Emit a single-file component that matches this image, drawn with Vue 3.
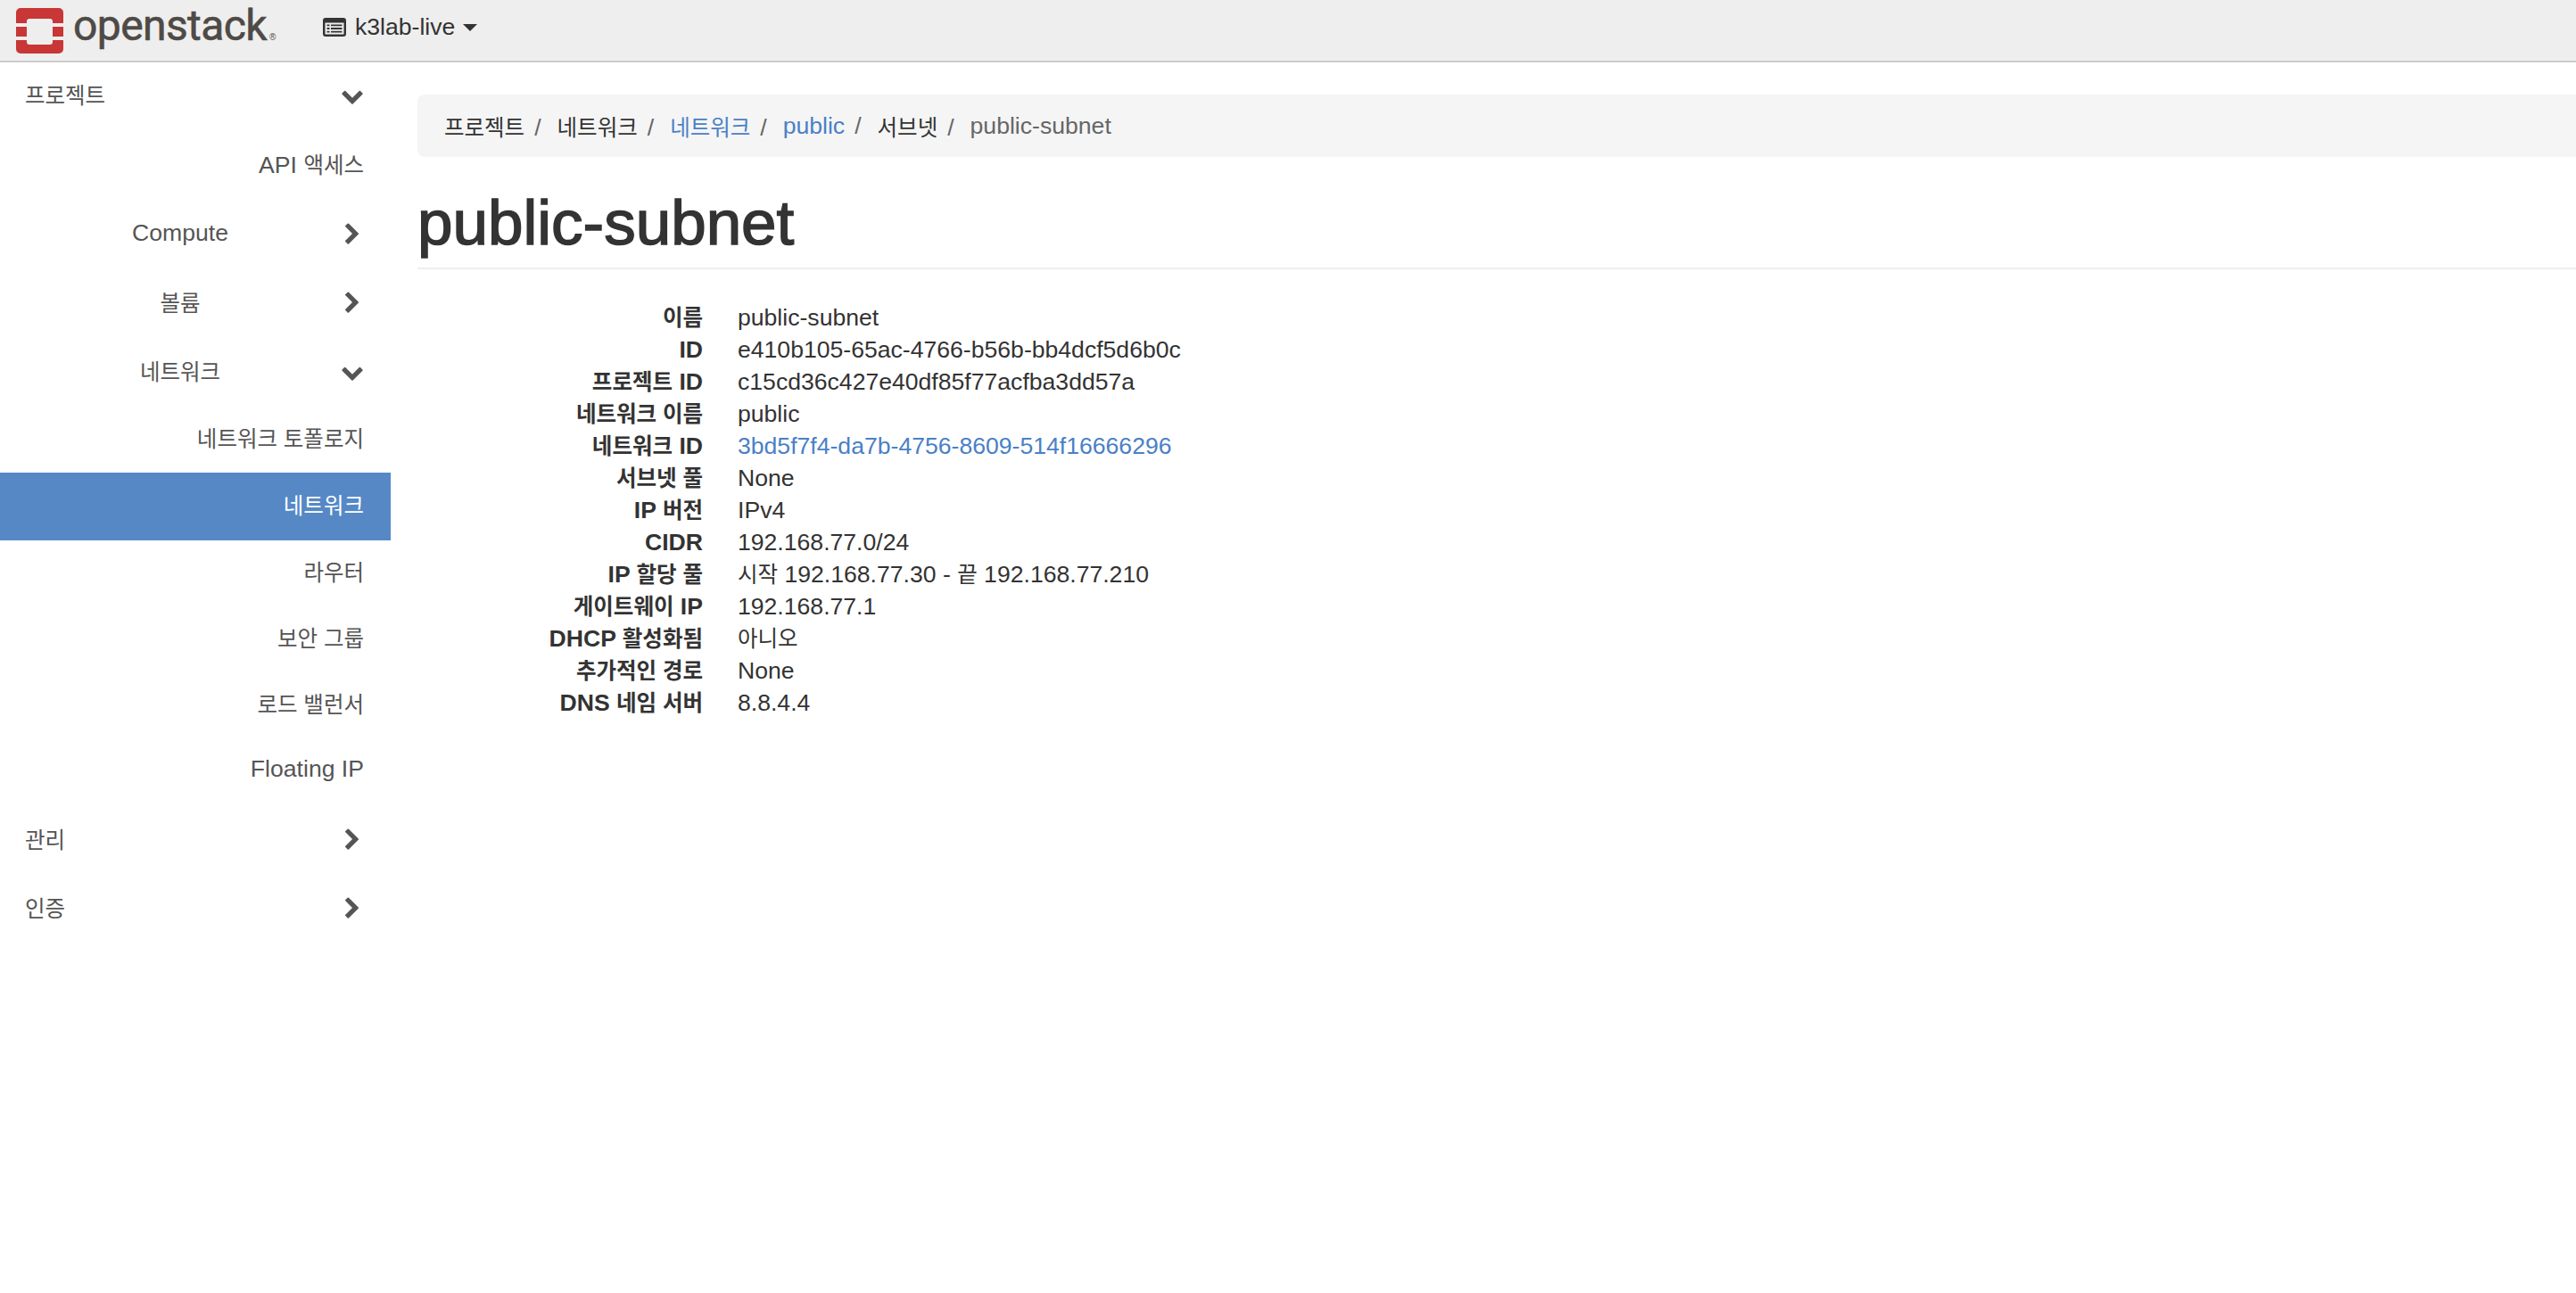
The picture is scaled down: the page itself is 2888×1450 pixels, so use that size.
<template>
  <div class="page">
    <header class="topbar">
      <a class="brand">
        <svg class="brand-mark" viewBox="0 0 53 51" width="53" height="51">
          <path
            fill="#c83636"
            fill-rule="evenodd"
            d="M5 0h43a5 5 0 0 1 5 5v12H41v-2a3 3 0 0 0-3-3H15a3 3 0 0 0-3 3v2H0V5a5 5 0 0 1 5-5zM0 21h12v11H0zM41 21h12v11H41zM0 36h12v2a3 3 0 0 0 3 3h23a3 3 0 0 0 3-3v-2h12v10a5 5 0 0 1-5 5H5a5 5 0 0 1-5-5z"
          />
        </svg>
        <span class="brand-name">openstack</span>
        <span class="brand-reg">®</span>
      </a>
      <div class="project-picker">
        <svg class="project-icon" viewBox="0 0 26 21" width="26" height="21">
          <rect x="0" y="0" width="26" height="21" rx="3" fill="#333" />
          <rect x="2.5" y="5.5" width="21" height="13" fill="#eee" />
          <path
            fill="#333"
            d="M4.5 7.5h3v1.8h-3zM9 7.5h12.5v1.8H9zM4.5 11.1h3v1.8h-3zM9 11.1h12.5v1.8H9zM4.5 14.7h3v1.8h-3zM9 14.7h12.5v1.8H9z"
          />
        </svg>
        <span>k3lab-live</span>
        <i class="caret"></i>
      </div>
    </header>

    <div class="layout">
      <nav class="sidebar">
        <div
          v-for="item in menu"
          :key="item.label + item.level"
          :class="['menu-row', 'level-' + item.level, { active: item.active }]"
        >
          <span class="menu-label"><span
            v-for="part in split(item.label)"
            :key="part.text"
            :class="{ ko: part.ko }"
          >{{ part.text }}</span></span>
          <svg
            v-if="item.icon"
            class="chevron"
            viewBox="0 0 1792 1792"
            width="26"
            height="26"
          >
            <path fill="#555" :d="item.icon === 'down' ? chevronDown : chevronRight" />
          </svg>
        </div>
      </nav>

      <main class="content">
        <ol class="breadcrumb">
          <li v-for="crumb in crumbs" :key="crumb.label + crumb.type" :class="crumb.type">
            <span
              v-for="part in split(crumb.label)"
              :key="part.text"
              :class="{ ko: part.ko }"
            >{{ part.text }}</span>
          </li>
        </ol>
        <h1 class="page-title">public-subnet</h1>
        <dl class="details">
          <template v-for="row in details" :key="row.label">
            <dt><span
              v-for="part in split(row.label)"
              :key="part.text"
              :class="{ ko: part.ko }"
            >{{ part.text }}</span></dt>
            <dd :class="{ link: row.link }"><span
              v-for="part in split(row.value)"
              :key="part.text"
              :class="{ ko: part.ko }"
            >{{ part.text }}</span></dd>
          </template>
        </dl>
      </main>
    </div>
  </div>
</template>

<script setup>
const chevronRight =
  "M1363 877l-742 742q-19 19-45 19t-45-19l-166-166q-19-19-19-45t19-45l531-531-531-531q-19-19-19-45t19-45l166-166q19-19 45-19t45 19l742 742q19 19 19 45t-19 45z";
const chevronDown =
  "M1683 808l-742 741q-19 19-45 19t-45-19l-742-741q-19-19-19-45.5t19-45.5l166-165q19-19 45-19t45 19l531 531 531-531q19-19 45-19t45 19l166 165q19 19 19 45.5t-19 45.5z";

// hangul is set a bit smaller than latin, the CJK font runs wide
function split(text) {
  return text
    .split(/([\uac00-\ud7a3]+(?:\s+[\uac00-\ud7a3]+)*)/)
    .filter(Boolean)
    .map((t) => ({ text: t, ko: /[\uac00-\ud7a3]/.test(t) }));
}

const menu = [
  { label: "프로젝트", level: 1, icon: "down" },
  { label: "API 액세스", level: 3 },
  { label: "Compute", level: 2, icon: "right" },
  { label: "볼륨", level: 2, icon: "right" },
  { label: "네트워크", level: 2, icon: "down" },
  { label: "네트워크 토폴로지", level: 3 },
  { label: "네트워크", level: 3, active: true },
  { label: "라우터", level: 3 },
  { label: "보안 그룹", level: 3 },
  { label: "로드 밸런서", level: 3 },
  { label: "Floating IP", level: 3 },
  { label: "관리", level: 1, icon: "right" },
  { label: "인증", level: 1, icon: "right" },
];

const crumbs = [
  { label: "프로젝트", type: "plain" },
  { label: "네트워크", type: "plain" },
  { label: "네트워크", type: "link" },
  { label: "public", type: "link" },
  { label: "서브넷", type: "plain" },
  { label: "public-subnet", type: "current" },
];

const details = [
  { label: "이름", value: "public-subnet" },
  { label: "ID", value: "e410b105-65ac-4766-b56b-bb4dcf5d6b0c" },
  { label: "프로젝트 ID", value: "c15cd36c427e40df85f77acfba3dd57a" },
  { label: "네트워크 이름", value: "public" },
  { label: "네트워크 ID", value: "3bd5f7f4-da7b-4756-8609-514f16666296", link: true },
  { label: "서브넷 풀", value: "None" },
  { label: "IP 버전", value: "IPv4" },
  { label: "CIDR", value: "192.168.77.0/24" },
  { label: "IP 할당 풀", value: "시작 192.168.77.30 - 끝 192.168.77.210" },
  { label: "게이트웨이 IP", value: "192.168.77.1" },
  { label: "DHCP 활성화됨", value: "아니오" },
  { label: "추가적인 경로", value: "None" },
  { label: "DNS 네임 서버", value: "8.8.4.4" },
];
</script>

<style>
html,
body {
  background: #fff;
  overflow: hidden;
}
</style>

<style scoped>
.page {
  width: 2888px;
  height: 1450px;
  overflow: hidden;
  font-family: "Liberation Sans", "Noto Sans CJK KR", sans-serif;
  font-size: 26.6px;
  color: #333;
}
.ko {
  font-size: 24.5px;
}
.topbar {
  display: flex;
  align-items: center;
  height: 68px;
  background: #eee;
  border-bottom: 2px solid #ccc;
}
.brand {
  display: flex;
  align-items: center;
  margin-left: 18px;
  width: 344px;
}
.brand-mark {
  flex: none;
}
.brand-name {
  flex: none;
  width: 218px;
  margin: 0 0 11px 11px;
  font-family: Roboto, sans-serif;
  font-size: 48px;
  line-height: 50px;
  letter-spacing: -0.6px;
  color: #4e4a45;
  -webkit-text-stroke: 0.6px #4e4a45;
}
.brand-reg {
  align-self: flex-end;
  margin: 0 0 18px 2px;
  font-size: 10px;
  color: #4e4a45;
}
.project-picker {
  display: flex;
  align-items: center;
  margin-bottom: 7px;
}
.project-icon {
  margin-right: 10px;
}
.caret {
  width: 0;
  height: 0;
  margin-left: 9px;
  border-top: 8px solid #333;
  border-left: 8px solid transparent;
  border-right: 8px solid transparent;
}
.layout {
  display: flex;
}
.sidebar {
  flex: none;
  width: 438px;
  margin-top: -3px;
  color: #555;
}
.menu-row {
  display: flex;
  align-items: center;
  box-sizing: border-box;
  height: 77px;
}
.chevron {
  margin-top: 3px;
}
.level-1 {
  justify-content: space-between;
  padding: 0 30px 0 28px;
}
.level-2 {
  padding-right: 30px;
}
.level-2 .menu-label {
  flex: 1;
  text-align: center;
  padding-left: 22px;
}
.level-3 {
  justify-content: flex-end;
  height: 74px;
  padding: 0 30px 6px 0;
}
.level-1 + .level-3 {
  margin-top: 5px;
}
.level-2 + .level-3 {
  margin-top: 2px;
}
.active {
  height: 76px;
  background: #5688c6;
  color: #fff;
}
.content {
  flex: 1;
  min-width: 0;
  padding-left: 30px;
}
.breadcrumb {
  display: flex;
  align-items: center;
  height: 70px;
  margin: 36px 0 0;
  padding: 0 0 0 30px;
  list-style: none;
  background: #f5f5f5;
  border-radius: 8px 0 0 8px;
}
.breadcrumb li {
  color: #333;
}
.breadcrumb li:not(:last-child)::after {
  content: "/";
  margin: 0 18px 0 11px;
  color: #666;
}
.breadcrumb .link {
  color: #4a80c6;
}
.breadcrumb .current {
  color: #666;
}
.page-title {
  margin: 0;
  padding: 39px 0 15px;
  font-size: 71px;
  line-height: 70px;
  font-weight: 400;
  -webkit-text-stroke: 1.5px #333;
  border-bottom: 2px solid #eee;
}
.details {
  display: grid;
  grid-template-columns: 320px 1fr;
  grid-auto-rows: 36px;
  column-gap: 39px;
  margin: 36px 0 0;
  line-height: 36px;
}
.details dt {
  text-align: right;
  font-weight: 700;
}
.details dd {
  margin: 0;
}
.details .link {
  color: #4a80c6;
}
</style>
